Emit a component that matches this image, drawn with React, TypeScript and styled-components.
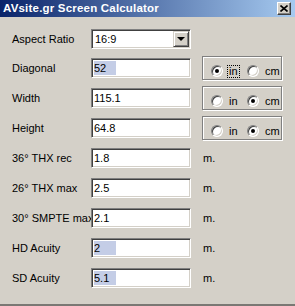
import styled, { createGlobalStyle } from 'styled-components';

const GlobalStyle = createGlobalStyle`
  html, body {
    margin: 0;
    padding: 0;
    background: #d4d0c8;
  }
`;

type Unit = 'in' | 'cm';

const rows: { label: string; value: string; selected?: boolean; unit?: Unit; focused?: boolean }[] = [
  { label: 'Diagonal', value: '52', selected: true, unit: 'in', focused: true },
  { label: 'Width', value: '115.1', unit: 'cm' },
  { label: 'Height', value: '64.8', unit: 'cm' },
  { label: '36° THX rec', value: '1.8' },
  { label: '26° THX max', value: '2.5' },
  { label: '30° SMPTE max', value: '2.1' },
  { label: 'HD Acuity', value: '2', selected: true },
  { label: 'SD Acuity', value: '5.1', selected: true },
];

const CloseIcon = () => (
  <svg width="8" height="7" viewBox="0 0 8 7">
    <path d="M0.5 0.5 L7.5 6.5 M7.5 0.5 L0.5 6.5" stroke="#000" strokeWidth="1.6" />
  </svg>
);

const UnitGroup = ({ unit, focused }: { unit: Unit; focused?: boolean }) => (
  <GroupBox>
    <RadioOption>
      <RadioCircle $checked={unit === 'in'} />
      <RadioText $focused={focused}>in</RadioText>
    </RadioOption>
    <RadioOption>
      <RadioCircle $checked={unit === 'cm'} />
      <RadioText>cm</RadioText>
    </RadioOption>
  </GroupBox>
);

export default function App() {
  return (
    <>
      <GlobalStyle />
      <Window>
        <TitleBar>
          <Title>AVsite.gr Screen Calculator</Title>
          <CloseButton>
            <CloseIcon />
          </CloseButton>
        </TitleBar>
        <Form>
          <Row $first>
            <Label>Aspect Ratio</Label>
            <Select>
              <span>16:9</span>
              <DropButton>
                <Arrow />
              </DropButton>
            </Select>
          </Row>
          {rows.map((r) => (
            <Row key={r.label}>
              <Label>{r.label}</Label>
              <Field>{r.selected ? <Selected>{r.value}</Selected> : r.value}</Field>
              {r.unit ? <UnitGroup unit={r.unit} focused={r.focused} /> : <Suffix>m.</Suffix>}
            </Row>
          ))}
        </Form>
      </Window>
    </>
  );
}

const Window = styled.div`
  width: 295px;
  height: 306px;
  box-sizing: border-box;
  display: flex;
  flex-direction: column;
  background: #d4d0c8;
  border-bottom: 2px solid #7a7874;
  font-family: 'Liberation Sans', Arial, sans-serif;
  font-size: 11px;
  color: #000;
`;

const TitleBar = styled.div`
  height: 17px;
  flex: none;
  display: flex;
  align-items: center;
  justify-content: space-between;
  padding: 0 4px 0 3px;
  background: linear-gradient(to right, #0a246a, #a6caf0);
`;

const Title = styled.div`
  color: #fff;
  font-weight: bold;
  font-size: 11.5px;
  letter-spacing: 0.2px;
  line-height: 17px;
`;

const CloseButton = styled.div`
  width: 14px;
  height: 13px;
  box-sizing: border-box;
  display: flex;
  align-items: center;
  justify-content: center;
  background: #d4d0c8;
  border: 1px solid;
  border-color: #fff #404040 #404040 #fff;
  box-shadow: inset -1px -1px #808080;
`;

const Form = styled.div`
  padding: 8px 0 0 12px;
`;

const Row = styled.div<{ $first?: boolean }>`
  height: ${(p) => (p.$first ? 28 : 30)}px;
  display: grid;
  grid-template-columns: 79px 100px 1fr;
  align-items: center;
`;

const Label = styled.div`
  white-space: nowrap;
`;

const inset = `
  box-sizing: border-box;
  border: 1px solid;
  border-color: #808080 #fff #fff #808080;
  box-shadow: inset 1px 1px #404040, inset -1px -1px #d4d0c8;
  background: #fff;
`;

const Field = styled.div`
  ${inset}
  height: 20px;
  padding: 2px 2px 0;
  line-height: 14px;
`;

const Selected = styled.span`
  display: inline-block;
  min-width: 20px;
  padding-right: 2px;
  background: #c4cde6;
`;

const Select = styled.div`
  ${inset}
  height: 20px;
  display: flex;
  align-items: center;
  justify-content: space-between;
  padding: 0 1px 0 3px;
`;

const DropButton = styled.div`
  width: 16px;
  height: 16px;
  box-sizing: border-box;
  display: flex;
  align-items: center;
  justify-content: center;
  background: #d4d0c8;
  border: 1px solid;
  border-color: #d4d0c8 #404040 #404040 #d4d0c8;
  box-shadow: inset 1px 1px #fff, inset -1px -1px #808080;
`;

const Arrow = styled.div`
  width: 0;
  height: 0;
  border-left: 4px solid transparent;
  border-right: 4px solid transparent;
  border-top: 4px solid #000;
`;

const Suffix = styled.div`
  margin-left: 12px;
`;

const GroupBox = styled.div`
  width: 80px;
  height: 24px;
  margin-left: 11px;
  box-sizing: border-box;
  display: flex;
  align-items: center;
  padding: 7px 0 1px 8px;
  border: 1px solid #808080;
  box-shadow: inset 1px 1px #fff, 1px 1px #fff;
`;

const RadioOption = styled.div`
  display: flex;
  align-items: center;
  gap: 4px;
  min-width: 36px;
`;

const RadioCircle = styled.div<{ $checked?: boolean }>`
  position: relative;
  width: 12px;
  height: 12px;
  box-sizing: border-box;
  border-radius: 50%;
  border: 1px solid;
  border-color: #808080 #fff #fff #808080;
  box-shadow: inset 1px 1px #404040, inset -1px -1px #d4d0c8;
  background: #fff;

  &::after {
    content: '';
    display: ${(p) => (p.$checked ? 'block' : 'none')};
    position: absolute;
    left: 3px;
    top: 3px;
    width: 4px;
    height: 4px;
    border-radius: 50%;
    background: #000;
  }
`;

const RadioText = styled.span<{ $focused?: boolean }>`
  padding: 0 1px;
  line-height: 11px;
  border: 1px dotted ${(p) => (p.$focused ? '#000' : 'transparent')};
`;
